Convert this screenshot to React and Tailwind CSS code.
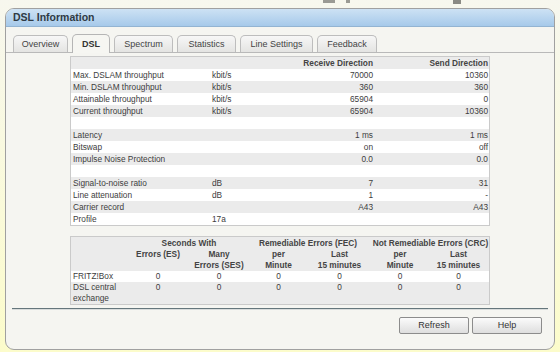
import React from "react";

const tabs = ["Overview", "DSL", "Spectrum", "Statistics", "Line Settings", "Feedback"];
const tabWidths = { Overview: 55, DSL: 38, Spectrum: 59, Statistics: 59, "Line Settings": 73, Feedback: 60 };

const lineRows = [
  ["Max. DSLAM throughput", "kbit/s", "70000", "10360"],
  ["Min. DSLAM throughput", "kbit/s", "360", "360"],
  ["Attainable throughput", "kbit/s", "65904", "0"],
  ["Current throughput", "kbit/s", "65904", "10360"],
  ["", "", "", ""],
  ["Latency", "", "1 ms", "1 ms"],
  ["Bitswap", "", "on", "off"],
  ["Impulse Noise Protection", "", "0.0", "0.0"],
  ["", "", "", ""],
  ["Signal-to-noise ratio", "dB", "7", "31"],
  ["Line attenuation", "dB", "1", "-"],
  ["Carrier record", "", "A43", "A43"],
  ["Profile", "17a", "", ""],
];

const errRows = [
  ["FRITZ!Box", "0", "0", "0", "0", "0", "0"],
  ["DSL central exchange", "0", "0", "0", "0", "0", "0"],
];

function Tab({ name, active }) {
  if (active) {
    return (
      <div
        className="relative -mb-px h-[19px] rounded-t-[5px] border border-b-0 border-[#b5b5b5] bg-[#f6f6f2] text-center font-bold leading-[18px] text-[#333]"
        style={{ width: tabWidths[name] }}
      >
        {name}
      </div>
    );
  }
  return (
    <div
      className="h-[17px] rounded-t-[5px] border border-b-0 border-[#bdbdbd] bg-gradient-to-b from-[#f7f7f7] to-[#e4e4e2] text-center leading-[17px] text-[#444]"
      style={{ width: tabWidths[name] }}
    >
      {name}
    </div>
  );
}

function Button({ children }) {
  return (
    <button className="h-[17px] w-[70px] rounded-[2px] border border-[#8c8c8c] bg-gradient-to-b from-[#fbfbfb] to-[#dedede] text-[9px] leading-[15px] text-[#333]">
      {children}
    </button>
  );
}

export default function App() {
  return (
    <div
      className="h-[352px] w-[560px] overflow-hidden bg-gradient-to-b from-[#f7f7ee] to-[#fcfccb] px-[5px]"
      style={{ fontFamily: '"Liberation Sans", Arial, sans-serif' }}
    >
      {/* cut-off toolbar bits */}
      <div className="flex h-[8px] items-start">
        <span className="ml-[318px] h-[3px] w-[12px] bg-[#9a9a94]" />
        <span className="ml-[11px] h-[3px] w-[4px] bg-[#9a9a94]" />
        <span className="ml-[103px] h-[4px] w-[8px] bg-[#8a8a84]" />
      </div>

      <div className="flex h-[342px] w-[550px] flex-col overflow-hidden rounded-[9px] border border-[#a0a0a0] bg-[#f5f5f1]">
        {/* header */}
        <div className="h-[18px] border-b border-[#93b4d2] bg-gradient-to-b from-[#cde2f4] to-[#a6c9ea] pl-[7px] text-[10.5px] font-bold leading-[17px] text-[#2f3a44]">
          DSL Information
        </div>

        {/* tabs */}
        <div className="flex h-[26px] items-end gap-[4px] border-b border-[#b9b9b9] pl-[7px] text-[9px]">
          {tabs.map((t) => (
            <Tab key={t} name={t} active={t === "DSL"} />
          ))}
        </div>

        {/* content */}
        <div className="flex flex-1 flex-col pl-[64px] pt-[3px] text-[8.3px] text-[#3d3d3d]">
          <div className="w-[420px] border border-[#cacaca] bg-white">
            <div className="grid h-[12px] grid-cols-[139px_70px_95px_114px] bg-[#ebebeb] font-bold leading-[12px] text-[#444]">
              <div />
              <div />
              <div className="pr-[2px] text-right">Receive Direction</div>
              <div className="pr-[1px] text-right">Send Direction</div>
            </div>
            {lineRows.map((r, i) => (
              <div
                key={i}
                className={`grid h-[12px] grid-cols-[139px_70px_95px_114px] leading-[12px] ${
                  i % 2 === 0 ? "bg-white" : "bg-[#ebebeb]"
                }`}
              >
                <div className="pl-[2px]">{r[0]}</div>
                <div className="pl-[2px]">{r[1]}</div>
                <div className="pr-[2px] text-right">{r[2]}</div>
                <div className="pr-[1px] text-right">{r[3]}</div>
              </div>
            ))}
          </div>

          <div className="mt-[10px] w-[420px] border border-[#cacaca] bg-white">
            <div className="grid grid-cols-[57px_60px_62px_57px_65px_56px_61px] bg-[#ebebeb] text-center font-bold leading-[10.6px] text-[#444]">
              <div className="h-[12px] leading-[12px]" />
              <div className="col-span-2 h-[12px] whitespace-nowrap leading-[12px]">Seconds With</div>
              <div className="col-span-2 h-[12px] whitespace-nowrap pr-[6px] leading-[12px]">Remediable Errors (FEC)</div>
              <div className="col-span-2 h-[12px] whitespace-nowrap leading-[12px]">Not Remediable Errors (CRC)</div>
              <div className="h-[22px]" />
              <div>Errors (ES)</div>
              <div>Many<br />Errors (SES)</div>
              <div>per<br />Minute</div>
              <div>Last<br />15 minutes</div>
              <div>per<br />Minute</div>
              <div>Last<br />15 minutes</div>
            </div>
            {errRows.map((r, i) => (
              <div
                key={i}
                className={`grid grid-cols-[57px_60px_62px_57px_65px_56px_61px] leading-[11px] ${
                  i % 2 === 0 ? "bg-white" : "bg-[#ebebeb]"
                }`}
              >
                <div className="pl-[2px]">{r[0]}</div>
                {r.slice(1).map((v, j) => (
                  <div key={j} className="text-center">
                    {v}
                  </div>
                ))}
              </div>
            ))}
          </div>
        </div>

        {/* footer */}
        <div className="mx-[6px] border-t border-b border-t-[#65767c] border-b-[#d8dcdc]" />
        <div className="flex justify-end gap-[3px] pb-[15px] pr-[12px] pt-[7px]">
          <Button>Refresh</Button>
          <Button>Help</Button>
        </div>
      </div>
    </div>
  );
}
